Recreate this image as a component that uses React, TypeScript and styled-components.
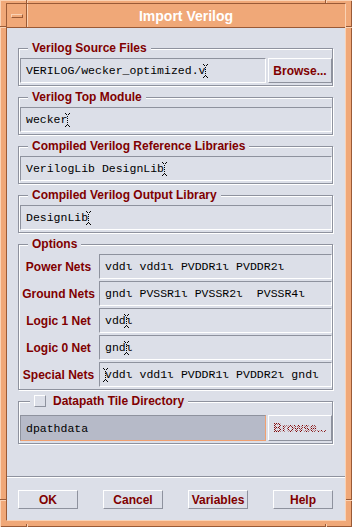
import React from "react";
import styled, { createGlobalStyle } from "styled-components";

const Colors = {
  Frame: "#f0a878",
  FrameLight: "#fad2b4",
  FrameDark: "#9a5a36",
  Client: "#dcdfe8",
  Shadow: "#8e929e",
  Highlight: "#ffffff",
  Label: "#800000",
  FieldDim: "#b6bac8",
  Focus: "#f0a070",
};

const Sans = `"Liberation Sans", Arial, sans-serif`;
const Mono = `"Liberation Mono", "Courier New", monospace`;

const GlobalStyle = createGlobalStyle`
  html, body {
    margin: 0;
    padding: 0;
    background: ${Colors.Frame};
  }
  * {
    box-sizing: border-box;
  }
`;

/* Window frame */
const Window = styled.div`
  position: relative;
  width: 352px;
  height: 527px;
  padding: 3px 6px 6px 6px;
  background: ${Colors.Frame};
  box-shadow: inset 1px 1px 0 ${Colors.FrameLight},
    inset -1px -1px 0 ${Colors.FrameDark};
`;

const Inner = styled.div`
  display: flex;
  flex-direction: column;
  height: 100%;
  border: 1px solid;
  border-color: ${Colors.FrameDark} ${Colors.FrameLight} ${Colors.FrameLight}
    ${Colors.FrameDark};
`;

const Tick = styled.div<{ $v?: boolean }>`
  position: absolute;
  width: ${(p) => (p.$v ? "2px" : "6px")};
  height: ${(p) => (p.$v ? "3px" : "2px")};
  border-${(p) => (p.$v ? "left" : "top")}: 1px solid ${Colors.FrameDark};
  background: ${Colors.FrameLight};
`;

const TitleBar = styled.div`
  display: flex;
  height: 24px;
  border-bottom: 1px solid ${Colors.FrameDark};
  background: ${Colors.Frame};
`;

const MenuButton = styled.div`
  display: flex;
  align-items: center;
  justify-content: center;
  width: 20px;
  border-right: 1px solid ${Colors.FrameDark};
  box-shadow: 1px 0 0 ${Colors.FrameLight};
`;

const MenuBar = styled.div`
  width: 12px;
  height: 4px;
  border: 1px solid;
  border-color: ${Colors.FrameLight} ${Colors.FrameDark} ${Colors.FrameDark}
    ${Colors.FrameLight};
`;

const Title = styled.div`
  flex: 1;
  display: flex;
  align-items: center;
  justify-content: center;
  font: bold 14px ${Sans};
  color: #ffffff;
`;

/* Client area */
const Client = styled.div`
  flex: 1;
  display: flex;
  flex-direction: column;
  background: ${Colors.Client};
`;

const Body = styled.div`
  flex: 1;
  display: flex;
  flex-direction: column;
  gap: 4px;
  padding: 13px 12px 0 11px;
`;

const Group = styled.fieldset<{ $padTop?: number }>`
  margin: 0;
  min-inline-size: 0;
  padding: ${(p) => p.$padTop ?? 3}px 0 2px 1px;
  border: 1px solid ${Colors.Shadow};
  box-shadow: inset 1px 1px 0 ${Colors.Highlight}, 1px 1px 0 ${Colors.Highlight};
`;

const Legend = styled.legend<{ $offset?: number }>`
  display: flex;
  align-items: center;
  gap: 7px;
  margin-left: ${(p) => p.$offset ?? 8}px;
  padding: 0 4px;
  background: ${Colors.Client};
  font: bold 12px/14px ${Sans};
  color: ${Colors.Label};
`;

const CheckBox = styled.span`
  display: inline-block;
  width: 12px;
  height: 12px;
  border: 1px solid;
  border-color: ${Colors.Highlight} ${Colors.Shadow} ${Colors.Shadow}
    ${Colors.Highlight};
  background: ${Colors.Client};
`;

const FieldRow = styled.div`
  display: flex;
  gap: 2px;
`;

const Field = styled.div<{ $dim?: boolean; $h?: number }>`
  flex: 1;
  display: flex;
  align-items: center;
  height: ${(p) => p.$h ?? 25}px;
  padding: 0 5px;
  border: 1px solid;
  border-color: ${Colors.Shadow}
    ${(p) => (p.$dim ? Colors.Focus : Colors.Highlight)}
    ${(p) => (p.$dim ? Colors.Focus : Colors.Highlight)} ${Colors.Shadow};
  background: ${(p) => (p.$dim ? Colors.FieldDim : Colors.Client)};
  font: 11.5px ${Mono};
  color: #000000;
  white-space: pre;
  overflow: hidden;
`;

const Button = styled.div<{ $w?: number; $h?: number }>`
  display: flex;
  align-items: center;
  justify-content: center;
  width: ${(p) => p.$w ?? 60}px;
  height: ${(p) => p.$h ?? 19}px;
  border: 1px solid;
  border-color: ${Colors.Highlight} ${Colors.Shadow} ${Colors.Shadow}
    ${Colors.Highlight};
  background: ${Colors.Client};
  font: bold 12px ${Sans};
  color: ${Colors.Label};
`;

const Stippled = styled.span`
  color: transparent;
  background: repeating-conic-gradient(${Colors.Label} 0 25%, transparent 0 50%)
    0 0 / 2px 2px;
  -webkit-background-clip: text;
  background-clip: text;
`;

const Options = styled.div`
  display: flex;
  flex-direction: column;
  gap: 2px;
`;

const OptionRow = styled.div`
  display: grid;
  grid-template-columns: 77px 1fr;
  gap: 2px;
`;

const OptionLabel = styled.div`
  display: flex;
  align-items: center;
  justify-content: center;
  font: bold 12px ${Sans};
  color: ${Colors.Label};
  white-space: nowrap;
`;

const Footer = styled.div`
  border-top: 1px solid ${Colors.Shadow};
  box-shadow: inset 0 1px 0 ${Colors.Highlight};
  display: flex;
  justify-content: space-between;
  padding: 13px 12px 11px 11px;
`;

const CaretSvg = styled.svg`
  display: inline-block;
  flex: none;
  margin: 0 -3px 0 -2px;
`;

const Caret = () => (
  <CaretSvg width="5" height="14" viewBox="0 0 5 14">
    <g fill="#000">
      <rect x="0" y="0" width="1" height="1" />
      <rect x="4" y="0" width="1" height="1" />
      <rect x="1" y="1" width="1" height="1" />
      <rect x="3" y="1" width="1" height="1" />
      <rect x="2" y="3" width="1" height="1" />
      <rect x="2" y="5" width="1" height="1" />
      <rect x="2" y="7" width="1" height="1" />
      <rect x="2" y="9" width="1" height="1" />
      <rect x="2" y="11" width="1" height="1" />
      <rect x="1" y="12" width="1" height="1" />
      <rect x="3" y="12" width="1" height="1" />
      <rect x="0" y="13" width="1" height="1" />
      <rect x="4" y="13" width="1" height="1" />
    </g>
  </CaretSvg>
);

const NL = "\u03b9";

const options: { label: string; before?: string; after?: string; caretFirst?: boolean }[] = [
  { label: "Power Nets", before: `vdd${NL} vdd1${NL} PVDDR1${NL} PVDDR2${NL}` },
  { label: "Ground Nets", before: `gnd${NL} PVSSR1${NL} PVSSR2${NL}  PVSSR4${NL}` },
  { label: "Logic 1 Net", before: "vdd", after: NL },
  { label: "Logic 0 Net", before: "gnd", after: NL },
  {
    label: "Special Nets",
    caretFirst: true,
    after: `vdd${NL} vdd1${NL} PVDDR1${NL} PVDDR2${NL} gnd${NL}`,
  },
];

const App: React.FC = () => {
  return (
    <>
      <GlobalStyle />
      <Window>
        <Tick $v style={{ left: 26, top: 0 }} />
        <Tick $v style={{ left: 325, top: 0 }} />
        <Tick $v style={{ left: 26, bottom: 0 }} />
        <Tick $v style={{ left: 325, bottom: 0 }} />
        <Tick style={{ left: 0, top: 26 }} />
        <Tick style={{ right: 0, top: 26 }} />
        <Tick style={{ left: 0, top: 499 }} />
        <Tick style={{ right: 0, top: 499 }} />
        <Inner>
          <TitleBar>
            <MenuButton>
              <MenuBar />
            </MenuButton>
            <Title>Import Verilog</Title>
          </TitleBar>
          <Client>
            <Body>
              <Group>
                <Legend>Verilog Source Files</Legend>
                <FieldRow>
                  <Field>
                    VERILOG/wecker_optimized.v
                    <Caret />
                  </Field>
                  <Button $w={64} $h={25}>
                    Browse...
                  </Button>
                </FieldRow>
              </Group>
              <Group>
                <Legend>Verilog Top Module</Legend>
                <Field>
                  wecker
                  <Caret />
                </Field>
              </Group>
              <Group>
                <Legend>Compiled Verilog Reference Libraries</Legend>
                <Field>
                  VerilogLib DesignLib
                  <Caret />
                </Field>
              </Group>
              <Group>
                <Legend>Compiled Verilog Output Library</Legend>
                <Field>
                  DesignLib
                  <Caret />
                </Field>
              </Group>
              <Group>
                <Legend>Options</Legend>
                <Options>
                  {options.map((o) => (
                    <OptionRow key={o.label}>
                      <OptionLabel>{o.label}</OptionLabel>
                      <Field>
                        {o.caretFirst && <Caret />}
                        {o.before}
                        {o.after !== undefined && !o.caretFirst && <Caret />}
                        {o.after}
                      </Field>
                    </OptionRow>
                  ))}
                </Options>
              </Group>
              <Group $padTop={7}>
                <Legend $offset={10}>
                  <CheckBox />
                  Datapath Tile Directory
                </Legend>
                <FieldRow>
                  <Field $dim $h={26}>
                    dpathdata
                  </Field>
                  <Button $w={64} $h={26}>
                    <Stippled>Browse...</Stippled>
                  </Button>
                </FieldRow>
              </Group>
            </Body>
            <Footer>
              <Button>OK</Button>
              <Button>Cancel</Button>
              <Button>Variables</Button>
              <Button>Help</Button>
            </Footer>
          </Client>
        </Inner>
      </Window>
    </>
  );
};

export default App;
